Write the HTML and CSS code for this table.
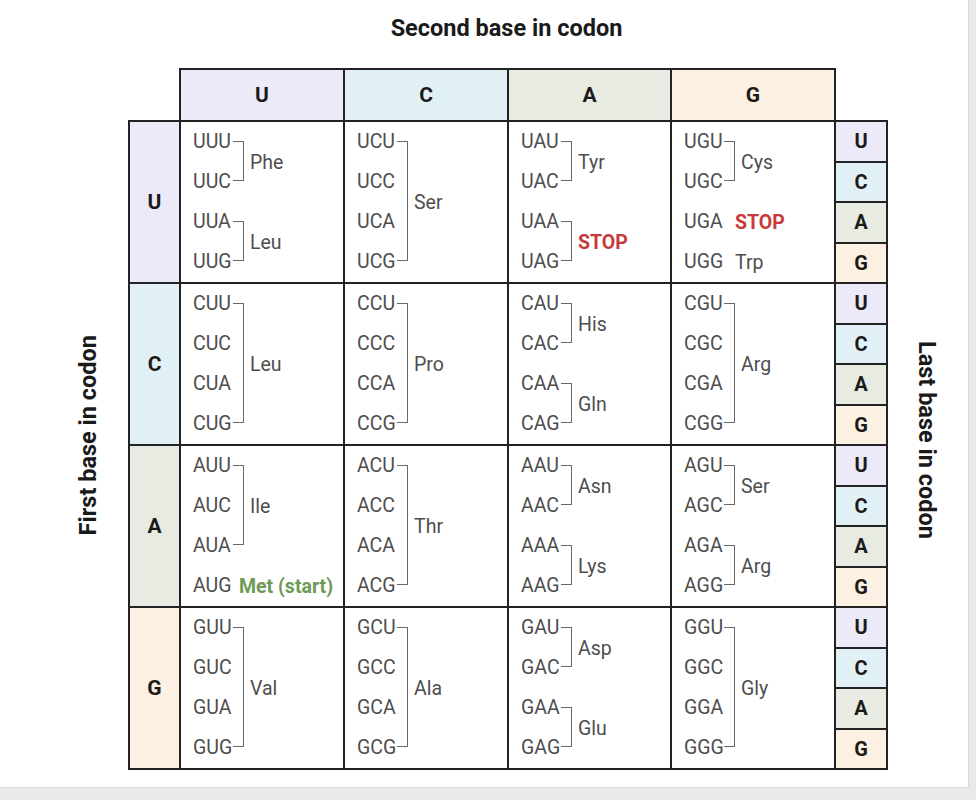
FILE: index.html
```html
<!DOCTYPE html>
<html lang="en">
<head>
<meta charset="utf-8">
<title>Codon table</title>
<link rel="stylesheet" href="styles.css">
</head>
<body>
<div class="card">
  <div class="title">Second base in codon</div>
  <div class="side side-left"><span>First base in codon</span></div>
  <table class="codons">
    <colgroup>
      <col class="c-row"><col class="c-main"><col class="c-main"><col class="c-narrow"><col class="c-main"><col class="c-last">
    </colgroup>
    <tr class="head">
      <td class="blank"></td>
      <th class="bu">U</th><th class="bc">C</th><th class="ba">A</th><th class="bg">G</th>
      <td class="blank"></td>
    </tr>
    <!-- Row U -->
    <tr class="body">
      <th class="rowh bu">U</th>
      <td class="cell">
        <div class="grp"><div class="cods"><span>UUU</span><span>UUC</span></div><i class="brk"></i><span class="aa">Phe</span></div>
        <div class="grp"><div class="cods"><span>UUA</span><span>UUG</span></div><i class="brk"></i><span class="aa">Leu</span></div>
      </td>
      <td class="cell">
        <div class="grp"><div class="cods"><span>UCU</span><span>UCC</span><span>UCA</span><span>UCG</span></div><i class="brk"></i><span class="aa">Ser</span></div>
      </td>
      <td class="cell">
        <div class="grp"><div class="cods"><span>UAU</span><span>UAC</span></div><i class="brk"></i><span class="aa">Tyr</span></div>
        <div class="grp"><div class="cods"><span>UAA</span><span>UAG</span></div><i class="brk"></i><span class="aa stop">STOP</span></div>
      </td>
      <td class="cell">
        <div class="grp"><div class="cods"><span>UGU</span><span>UGC</span></div><i class="brk"></i><span class="aa">Cys</span></div>
        <div class="grp"><div class="cods"><span>UGA</span></div><span class="aa single stop">STOP</span></div>
        <div class="grp"><div class="cods"><span>UGG</span></div><span class="aa single">Trp</span></div>
      </td>
      <td class="last">
        <div class="lasts"><div class="bu">U</div><div class="bc">C</div><div class="ba">A</div><div class="bg">G</div></div>
      </td>
    </tr>
    <!-- Row C -->
    <tr class="body">
      <th class="rowh bc">C</th>
      <td class="cell">
        <div class="grp"><div class="cods"><span>CUU</span><span>CUC</span><span>CUA</span><span>CUG</span></div><i class="brk"></i><span class="aa">Leu</span></div>
      </td>
      <td class="cell">
        <div class="grp"><div class="cods"><span>CCU</span><span>CCC</span><span>CCA</span><span>CCG</span></div><i class="brk"></i><span class="aa">Pro</span></div>
      </td>
      <td class="cell">
        <div class="grp"><div class="cods"><span>CAU</span><span>CAC</span></div><i class="brk"></i><span class="aa">His</span></div>
        <div class="grp"><div class="cods"><span>CAA</span><span>CAG</span></div><i class="brk"></i><span class="aa">Gln</span></div>
      </td>
      <td class="cell">
        <div class="grp"><div class="cods"><span>CGU</span><span>CGC</span><span>CGA</span><span>CGG</span></div><i class="brk"></i><span class="aa">Arg</span></div>
      </td>
      <td class="last">
        <div class="lasts"><div class="bu">U</div><div class="bc">C</div><div class="ba">A</div><div class="bg">G</div></div>
      </td>
    </tr>
    <!-- Row A -->
    <tr class="body">
      <th class="rowh ba">A</th>
      <td class="cell">
        <div class="grp"><div class="cods"><span>AUU</span><span>AUC</span><span>AUA</span></div><i class="brk"></i><span class="aa">Ile</span></div>
        <div class="grp"><div class="cods"><span>AUG</span></div><span class="aa met">Met (start)</span></div>
      </td>
      <td class="cell">
        <div class="grp"><div class="cods"><span>ACU</span><span>ACC</span><span>ACA</span><span>ACG</span></div><i class="brk"></i><span class="aa">Thr</span></div>
      </td>
      <td class="cell">
        <div class="grp"><div class="cods"><span>AAU</span><span>AAC</span></div><i class="brk"></i><span class="aa">Asn</span></div>
        <div class="grp"><div class="cods"><span>AAA</span><span>AAG</span></div><i class="brk"></i><span class="aa">Lys</span></div>
      </td>
      <td class="cell">
        <div class="grp"><div class="cods"><span>AGU</span><span>AGC</span></div><i class="brk"></i><span class="aa">Ser</span></div>
        <div class="grp"><div class="cods"><span>AGA</span><span>AGG</span></div><i class="brk"></i><span class="aa">Arg</span></div>
      </td>
      <td class="last">
        <div class="lasts"><div class="bu">U</div><div class="bc">C</div><div class="ba">A</div><div class="bg">G</div></div>
      </td>
    </tr>
    <!-- Row G -->
    <tr class="body">
      <th class="rowh bg">G</th>
      <td class="cell">
        <div class="grp"><div class="cods"><span>GUU</span><span>GUC</span><span>GUA</span><span>GUG</span></div><i class="brk"></i><span class="aa">Val</span></div>
      </td>
      <td class="cell">
        <div class="grp"><div class="cods"><span>GCU</span><span>GCC</span><span>GCA</span><span>GCG</span></div><i class="brk"></i><span class="aa">Ala</span></div>
      </td>
      <td class="cell">
        <div class="grp"><div class="cods"><span>GAU</span><span>GAC</span></div><i class="brk"></i><span class="aa">Asp</span></div>
        <div class="grp"><div class="cods"><span>GAA</span><span>GAG</span></div><i class="brk"></i><span class="aa">Glu</span></div>
      </td>
      <td class="cell">
        <div class="grp"><div class="cods"><span>GGU</span><span>GGC</span><span>GGA</span><span>GGG</span></div><i class="brk"></i><span class="aa">Gly</span></div>
      </td>
      <td class="last">
        <div class="lasts"><div class="bu">U</div><div class="bc">C</div><div class="ba">A</div><div class="bg">G</div></div>
      </td>
    </tr>
  </table>
  <div class="side side-right"><span>Last base in codon</span></div>
</div>
</body>
</html>
```

FILE: styles.css
```css
html, body {
  margin: 0;
  padding: 0;
}
body {
  background: #e9e9e9;
  font-family: Roboto, "Liberation Sans", Arial, sans-serif;
  color: #1c1c1c;
}
.card {
  width: 968px;
  height: 787px;
  background: #ffffff;
  border-right: 1px solid #dadada;
  border-bottom: 1px solid #dadada;
  display: grid;
  grid-template-columns: 128px 758px 1fr;
  grid-template-rows: 68px 700px 1fr;
}
.title {
  grid-column: 2;
  grid-row: 1;
  padding: 15px 52px 0 51px;
  text-align: center;
  font-size: 23.5px;
  line-height: 26px;
  font-weight: 700;
  color: #1a1a1a;
}
.side {
  grid-row: 2;
  display: flex;
  align-items: center;
  padding-top: 52px;
}
.side span {
  writing-mode: vertical-rl;
  font-size: 23.5px;
  font-weight: 700;
  line-height: 24px;
  color: #1a1a1a;
  white-space: nowrap;
}
.side-left {
  grid-column: 1;
  justify-content: flex-end;
  padding-right: 28px;
  padding-bottom: 18px;
}
.side-left span {
  transform: rotate(180deg);
}
.side-right {
  grid-column: 3;
  justify-content: flex-start;
  padding-left: 29px;
  padding-bottom: 8px;
}

.codons {
  grid-column: 2;
  grid-row: 2;
  align-self: start;
  width: 758px;
  table-layout: fixed;
  border-collapse: collapse;
  border-spacing: 0;
}
.c-row { width: 51px; }
.c-main { width: 164px; }
.c-narrow { width: 163px; }
.c-last { width: 52px; }

.codons th,
.codons td {
  border: 2px solid #222222;
  padding: 0;
}
.codons td.blank {
  border: none;
  background: transparent;
}
.head th {
  height: 50px;
  font-size: 21px;
  font-weight: 700;
  color: #1a1a1a;
  text-align: center;
  vertical-align: middle;
}
.rowh {
  font-size: 21px;
  font-weight: 700;
  color: #1a1a1a;
  text-align: center;
  vertical-align: middle;
}

.bu { background: #ece9f8; }
.bc { background: #e1f0f4; }
.ba { background: #e7ebe1; }
.bg { background: #fbf0e1; }

.cell {
  vertical-align: top;
  background: #ffffff;
  height: 160px;
}
.codons td.cell {
  padding-left: 12px;
}
.grp {
  display: flex;
  align-items: stretch;
}
.cods {
  width: 40px;
  flex: none;
}
.cods span {
  display: block;
  height: 40px;
  line-height: 40px;
  font-size: 19.5px;
  color: #4e4e4e;
  white-space: nowrap;
}
.brk {
  display: block;
  flex: none;
  width: 11px;
  box-sizing: border-box;
  margin: 19px 0 21px 0;
  border: 1.5px solid #6a6a6a;
  border-left: none;
}
.aa {
  align-self: center;
  margin-left: 6px;
  font-size: 19.5px;
  color: #4e4e4e;
  white-space: nowrap;
}
.aa.single {
  margin-left: 11px;
}
.aa.stop {
  color: #c83a3a;
  font-weight: 700;
}
.aa.met {
  margin-left: 6px;
  color: #6d9a57;
  font-weight: 700;
}

.last {
  vertical-align: top;
  height: 160px;
}
.lasts {
  display: flex;
  flex-direction: column;
  height: 160px;
}
.lasts div {
  flex: 1;
  display: flex;
  align-items: center;
  justify-content: center;
  font-size: 20px;
  font-weight: 700;
  color: #1a1a1a;
}
.lasts div + div {
  border-top: 2px solid #222222;
}
```
